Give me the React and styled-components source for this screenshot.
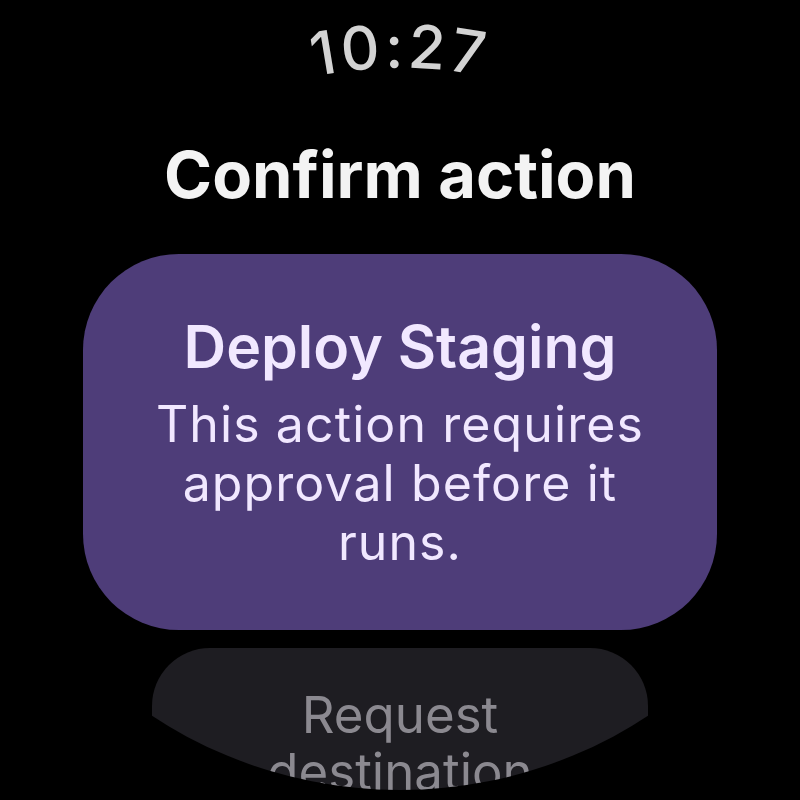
import styled, { createGlobalStyle } from "styled-components";

const GlobalStyle = createGlobalStyle`
  html, body {
    margin: 0;
    padding: 0;
    background: #000;
  }
  body {
    font-family: Inter, Roboto, "Noto Sans", sans-serif;
  }
`;

const Screen = styled.div`
  width: 800px;
  height: 800px;
  overflow: hidden;
  background: #000;
  display: flex;
  flex-direction: column;
  align-items: center;
`;

const TimeArc = styled.svg`
  display: block;
  width: 340px;
  height: 90px;
  flex-shrink: 0;
  overflow: visible;
`;

const Heading = styled.h1`
  margin: 47px 0 0;
  font-size: 65px;
  font-weight: 700;
  color: #f3f3f3;
  line-height: 76px;
`;

const Card = styled.div`
  margin-top: 41px;
  width: 634px;
  height: 376px;
  flex-shrink: 0;
  box-sizing: border-box;
  border-radius: 96px;
  background: #4e3d79;
  display: flex;
  flex-direction: column;
  align-items: center;
  justify-content: center;
  padding: 0 52px;
  text-align: center;
`;

const CardTitle = styled.div`
  font-size: 59px;
  font-weight: 600;
  color: #f1e8ff;
  line-height: 70px;
  margin-bottom: 13px;
`;

const CardBody = styled.div`
  font-size: 50px;
  font-weight: 400;
  color: #f1e8ff;
  line-height: 59px;
  letter-spacing: 1.1px;
`;

const Button = styled.div`
  margin-top: 18px;
  width: 496px;
  height: 160px;
  flex-shrink: 0;
  border-radius: 58px;
  background: #1e1d22;
  clip-path: circle(452px at 50% -310px);
  display: flex;
  flex-direction: column;
  align-items: center;
  padding-top: 38px;
  box-sizing: border-box;
  font-size: 51px;
  color: #8b8990;
  line-height: 57px;
  text-align: center;
`;

function Clock({ time }) {
  return (
    <TimeArc viewBox="0 0 340 90">
      <defs>
        <path id="timeCurve" d="M -270 508 A 440 440 0 0 1 610 508" />
      </defs>
      <text
        fill="#d3d3d3"
        fontFamily="Inter, Roboto, sans-serif"
        fontSize="60"
        fontWeight="500"
        letterSpacing="4"
        textAnchor="middle"
      >
        <textPath href="#timeCurve" startOffset="50%">
          {time}
        </textPath>
      </text>
    </TimeArc>
  );
}

export default function App() {
  return (
    <>
      <GlobalStyle />
      <Screen>
        <Clock time="10:27" />
        <Heading>Confirm action</Heading>
        <Card>
          <CardTitle>Deploy Staging</CardTitle>
          <CardBody>This action requires approval before it runs.</CardBody>
        </Card>
        <Button>
          Request
          <br />
          destination
        </Button>
      </Screen>
    </>
  );
}
